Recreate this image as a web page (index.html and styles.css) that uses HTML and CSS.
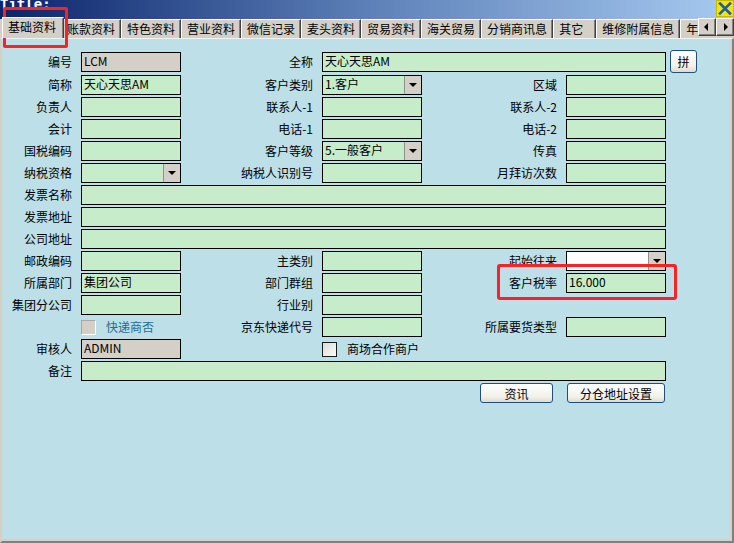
FILE: index.html
```html
<!DOCTYPE html>
<html lang="zh">
<head>
<meta charset="utf-8">
<title>基础资料</title>
<link rel="stylesheet" href="styles.css">
</head>
<body>
<div class="window">
  <div class="titlebar">
    <span class="title">Title:</span>
    <span class="close"><svg width="16" height="15" viewBox="0 0 16 15"><path d="M3 2.5 L13 12.5 M13 2.5 L3 12.5" stroke="#1b5fa6" stroke-width="2.6" stroke-linecap="square"/></svg></span>
  </div>
  <div class="tabstrip">
    <div class="tabs">
      <div class="tab active">基础资料</div>
      <div class="tab">账款资料</div>
      <div class="tab">特色资料</div>
      <div class="tab">营业资料</div>
      <div class="tab">微信记录</div>
      <div class="tab">麦头资料</div>
      <div class="tab">贸易资料</div>
      <div class="tab">海关贸易</div>
      <div class="tab">分销商讯息</div>
      <div class="tab tab-wide">其它</div>
      <div class="tab">维修附属信息</div>
      <div class="tab">年度资料</div>
    </div>
    <div class="scroll">
      <span class="sbtn"><svg width="16" height="16" viewBox="0 0 16 16"><polygon points="5,8 9,4 9,12" fill="#000"/></svg></span>
      <span class="sbtn"><svg width="16" height="16" viewBox="0 0 16 16"><polygon points="7,4 11,8 7,12" fill="#000"/></svg></span>
    </div>
  </div>
  <div class="panel">
    <div class="form">
      <div class="row row-first">
        <span class="lbl">编号</span>
        <span class="inp gray">LCM</span>
        <span class="lbl">全称</span>
        <span class="inp span3">天心天思AM</span>
        <span class="btn pin">拼</span>
      </div>
      <div class="row">
        <span class="lbl">简称</span>
        <span class="inp">天心天思AM</span>
        <span class="lbl">客户类别</span>
        <span class="inp select"><span class="val">1.客户</span><span class="drop"><i class="tri"></i></span></span>
        <span class="lbl">区域</span>
        <span class="inp"></span>
      </div>
      <div class="row">
        <span class="lbl">负责人</span>
        <span class="inp"></span>
        <span class="lbl">联系人-1</span>
        <span class="inp"></span>
        <span class="lbl">联系人-2</span>
        <span class="inp"></span>
      </div>
      <div class="row">
        <span class="lbl">会计</span>
        <span class="inp"></span>
        <span class="lbl">电话-1</span>
        <span class="inp"></span>
        <span class="lbl">电话-2</span>
        <span class="inp"></span>
      </div>
      <div class="row">
        <span class="lbl">国税编码</span>
        <span class="inp"></span>
        <span class="lbl">客户等级</span>
        <span class="inp select"><span class="val">5.一般客户</span><span class="drop"><i class="tri"></i></span></span>
        <span class="lbl">传真</span>
        <span class="inp"></span>
      </div>
      <div class="row">
        <span class="lbl">纳税资格</span>
        <span class="inp select"><span class="val"></span><span class="drop"><i class="tri"></i></span></span>
        <span class="lbl">纳税人识别号</span>
        <span class="inp"></span>
        <span class="lbl">月拜访次数</span>
        <span class="inp"></span>
      </div>
      <div class="row">
        <span class="lbl">发票名称</span>
        <span class="inp full"></span>
      </div>
      <div class="row">
        <span class="lbl">发票地址</span>
        <span class="inp full"></span>
      </div>
      <div class="row">
        <span class="lbl">公司地址</span>
        <span class="inp full"></span>
      </div>
      <div class="row">
        <span class="lbl">邮政编码</span>
        <span class="inp"></span>
        <span class="lbl">主类别</span>
        <span class="inp"></span>
        <span class="lbl">起始往来</span>
        <span class="inp select white"><span class="val"></span><span class="drop"><i class="tri"></i></span></span>
      </div>
      <div class="row">
        <span class="lbl">所属部门</span>
        <span class="inp">集团公司</span>
        <span class="lbl">部门群组</span>
        <span class="inp"></span>
        <span class="lbl">客户税率</span>
        <span class="inp">16.000</span>
      </div>
      <div class="row">
        <span class="lbl">集团分公司</span>
        <span class="inp"></span>
        <span class="lbl">行业别</span>
        <span class="inp"></span>
      </div>
      <div class="row">
        <span class="lbl"></span>
        <span class="check-group"><span class="cb cb-disabled"></span><span class="cb-text muted">快递商否</span></span>
        <span class="lbl">京东快递代号</span>
        <span class="inp"></span>
        <span class="lbl">所属要货类型</span>
        <span class="inp"></span>
      </div>
      <div class="row">
        <span class="lbl">审核人</span>
        <span class="inp gray">ADMIN</span>
        <span class="lbl"></span>
        <span class="check-group wide"><span class="cb"></span><span class="cb-text">商场合作商户</span></span>
      </div>
      <div class="row">
        <span class="lbl">备注</span>
        <span class="inp full"></span>
      </div>
      <div class="row">
        <span class="lbl"></span>
        <div class="actions">
          <span class="btn btn-info">资讯</span>
          <span class="btn btn-wh">分仓地址设置</span>
        </div>
      </div>
    </div>
  </div>
  <div class="mark mark-tab"></div>
  <div class="mark mark-tax"></div>
</div>
</body>
</html>
```
FILE: styles.css
```css
* { box-sizing: border-box; }
html, body { margin: 0; padding: 0; }
body {
  width: 734px;
  height: 543px;
  overflow: hidden;
  background: #d4d0c8;
  font-family: "Noto Sans CJK SC", "Liberation Sans", sans-serif;
  font-size: 12px;
  color: #000;
}
.window {
  position: relative;
  width: 734px;
  height: 543px;
  display: flex;
  flex-direction: column;
}
.titlebar {
  height: 19px;
  flex: none;
  background: linear-gradient(to right, #0a246a 0%, #5d80b8 50%, #a6caf0 100%);
  display: flex;
  justify-content: space-between;
  align-items: flex-start;
  overflow: hidden;
}
.title {
  color: #fff;
  font: bold 14px/12px "DejaVu Sans Mono", "Liberation Mono", monospace;
  margin-top: -2px;
}
.close {
  width: 18px;
  height: 17px;
  background: #f4e40a;
  border: 1px solid #c9b800;
  display: flex;
  align-items: center;
  justify-content: center;
}
.tabstrip {
  height: 21px;
  margin-top: -2px;
  flex: none;
  display: flex;
  padding-left: 2px;
}
.tabs {
  flex: 1;
  display: flex;
  align-items: flex-end;
  overflow: hidden;
}
.tab {
  flex: none;
  height: 19px;
  padding: 0 5px;
  line-height: 18px;
  background: #d4d0c8;
  border-left: 1px solid #fff;
  border-top: 1px solid #fff;
  border-right: 1px solid #404040;
  box-shadow: inset -1px 0 #808080;
  white-space: nowrap;
}
.tab.active {
  position: relative;
  z-index: 1;
  height: 21px;
  width: 62px;
  padding-bottom: 2px;
  margin-right: -3px;
}
.tab-wide { padding-right: 12px; }
.scroll {
  flex: none;
  display: flex;
  margin-top: 1px;
  align-self: flex-start;
}
.sbtn {
  width: 18px;
  height: 18px;
  background: #d4d0c8;
  border: 1px solid;
  border-color: #fff #404040 #404040 #fff;
  box-shadow: inset -1px -1px #808080;
  display: flex;
  align-items: center;
  justify-content: center;
}
.panel {
  flex: 1;
  background: #bddfe7;
  border-style: solid;
  border-width: 1px 2px 2px 2px;
  border-color: #eef4f4 #808080 #808080 #d4d0c8;
  box-shadow: inset -2px -2px 0 #d4d0c8;
}
.form {
  padding-top: 11px;
  display: flex;
  flex-direction: column;
  gap: 2px;
}
.row {
  display: grid;
  grid-template-columns: 79px 100px 141px 100px 144px 100px auto;
  align-items: center;
  height: 20px;
}
.row-first { height: 23px; }
.lbl {
  text-align: right;
  padding-right: 9px;
  line-height: 20px;
  white-space: nowrap;
}
.inp {
  height: 20px;
  border: 1px solid #000;
  background: #c6ecc9;
  padding: 0 2px;
  line-height: 16px;
  white-space: nowrap;
  overflow: hidden;
}
.inp.gray { background: #d4d0c8; }
.inp.span3 { grid-column: 4 / 7; }
.inp.full { grid-column: 2 / 7; }
.select { display: flex; padding: 0; }
.select .val { flex: 1; padding: 0 2px; }
.select.white { background: #fff; }
.drop {
  width: 17px;
  flex: none;
  background: #d4d0c8;
  border-left: 1px solid #909090;
  display: flex;
  align-items: center;
  justify-content: center;
}
.tri {
  width: 0;
  height: 0;
  border-left: 4px solid transparent;
  border-right: 4px solid transparent;
  border-top: 4px solid #000;
}
.btn {
  display: flex;
  align-items: center;
  justify-content: center;
  border: 1px solid #1f4f7f;
  border-radius: 3px;
  background: linear-gradient(#ffffff, #f2f1ea 70%, #dedbd0);
  height: 20px;
  white-space: nowrap;
}
.btn.pin {
  width: 27px;
  height: 23px;
  margin-left: 4px;
}
.check-group {
  display: flex;
  align-items: center;
  height: 20px;
}
.check-group.wide { grid-column: 4 / 7; }
.cb {
  width: 15px;
  height: 15px;
  flex: none;
  border: 1px solid #1c1c1c;
  background: linear-gradient(135deg, #dcdcd6, #fbfbf9);
}
.cb-disabled {
  border-color: #a8a8a8 #ffffff #ffffff #a8a8a8;
  background: #d4d0c8;
}
.cb-text { margin-left: 10px; line-height: 20px; }
.cb-text.muted { color: #2a6c8c; }
.actions {
  grid-column: 2 / 7;
  display: flex;
  justify-content: flex-end;
  gap: 14px;
  padding-right: 1px;
}
.btn-info { width: 73px; }
.btn-wh { width: 98px; }
.mark {
  position: absolute;
  border: 3px solid #fa2222;
  border-radius: 2px;
  pointer-events: none;
}
.mark-tab { left: 3px; top: 7px; width: 65px; height: 41px; }
.mark-tax { left: 497px; top: 264px; width: 180px; height: 36px; border-radius: 3px; }
```
